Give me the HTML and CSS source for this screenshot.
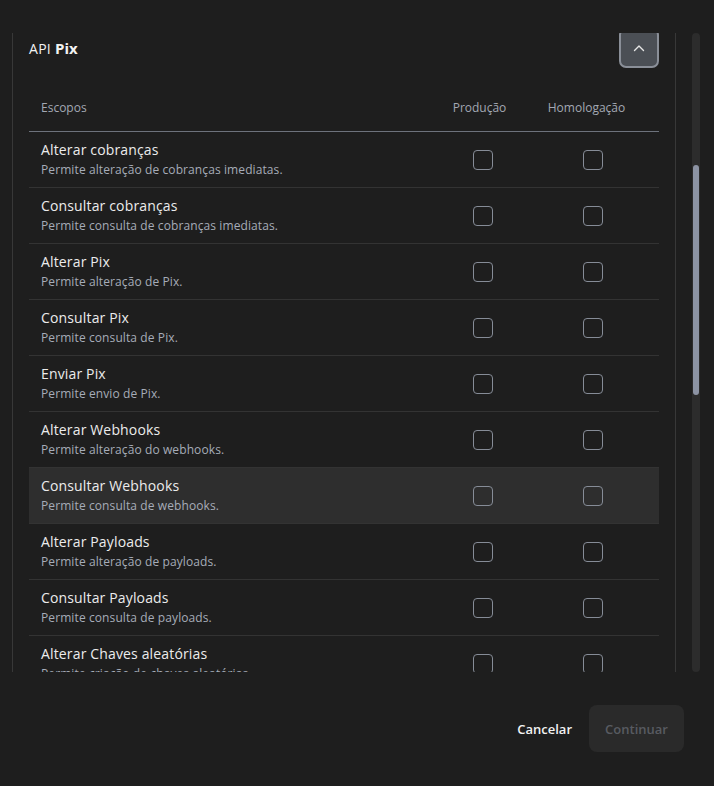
FILE: index.html
```html
<!DOCTYPE html>
<html lang="pt-BR">
<head>
<meta charset="utf-8">
<title>Escopos</title>
<link rel="stylesheet" href="styles.css">
</head>
<body>
<div class="modal">
  <div class="viewport">
    <section class="card">
      <header class="card-head">
        <h2 class="title"><span class="api">API</span> <span class="pix">Pix</span></h2>
        <button class="toggle" aria-label="Recolher">
          <svg width="12" height="8" viewBox="0 0 12 8"><path d="M1.5 6.5 L6 2 L10.5 6.5" fill="none" stroke="#e6e6e6" stroke-width="1.4" stroke-linecap="round" stroke-linejoin="round"/></svg>
        </button>
      </header>
      <div class="table">
        <div class="thead">
          <span>Escopos</span>
          <span class="c">Produção</span>
          <span class="c">Homologação</span>
        </div>
        <div class="row"><div class="info"><div class="name">Alterar cobranças</div><div class="desc">Permite alteração de cobranças imediatas.</div></div><span class="cell"><span class="box"></span></span><span class="cell"><span class="box"></span></span></div>
        <div class="row"><div class="info"><div class="name">Consultar cobranças</div><div class="desc">Permite consulta de cobranças imediatas.</div></div><span class="cell"><span class="box"></span></span><span class="cell"><span class="box"></span></span></div>
        <div class="row"><div class="info"><div class="name">Alterar Pix</div><div class="desc">Permite alteração de Pix.</div></div><span class="cell"><span class="box"></span></span><span class="cell"><span class="box"></span></span></div>
        <div class="row"><div class="info"><div class="name">Consultar Pix</div><div class="desc">Permite consulta de Pix.</div></div><span class="cell"><span class="box"></span></span><span class="cell"><span class="box"></span></span></div>
        <div class="row"><div class="info"><div class="name">Enviar Pix</div><div class="desc">Permite envio de Pix.</div></div><span class="cell"><span class="box"></span></span><span class="cell"><span class="box"></span></span></div>
        <div class="row"><div class="info"><div class="name">Alterar Webhooks</div><div class="desc">Permite alteração do webhooks.</div></div><span class="cell"><span class="box"></span></span><span class="cell"><span class="box"></span></span></div>
        <div class="row hover"><div class="info"><div class="name">Consultar Webhooks</div><div class="desc">Permite consulta de webhooks.</div></div><span class="cell"><span class="box"></span></span><span class="cell"><span class="box"></span></span></div>
        <div class="row"><div class="info"><div class="name">Alterar Payloads</div><div class="desc">Permite alteração de payloads.</div></div><span class="cell"><span class="box"></span></span><span class="cell"><span class="box"></span></span></div>
        <div class="row"><div class="info"><div class="name">Consultar Payloads</div><div class="desc">Permite consulta de payloads.</div></div><span class="cell"><span class="box"></span></span><span class="cell"><span class="box"></span></span></div>
        <div class="row"><div class="info"><div class="name">Alterar Chaves aleatórias</div><div class="desc">Permite criação de chaves aleatórias.</div></div><span class="cell"><span class="box"></span></span><span class="cell"><span class="box"></span></span></div>
      </div>
    </section>
    <div class="track"><div class="thumb"></div></div>
  </div>
  <footer class="actions">
    <button class="btn-cancel">Cancelar</button>
    <button class="btn-continue" disabled>Continuar</button>
  </footer>
</div>
</body>
</html>
```

FILE: styles.css
```css
* { box-sizing: border-box; }
html, body { margin: 0; padding: 0; }
body {
  background: #1e1e1e;
  font-family: "Open Sans", "Noto Sans", sans-serif;
  color: #e8e8e8;
  width: 714px;
  height: 786px;
  overflow: hidden;
}
.modal {
  padding-top: 33px;
  padding-left: 12px;
}
.viewport {
  display: flex;
  height: 639px;
  overflow: hidden;
}
.card {
  width: 664px;
  flex: none;
  border-left: 1px solid #383838;
  border-right: 1px solid #383838;
  padding: 0 16px;
  margin-top: -5px;
}
.card-head {
  display: flex;
  align-items: center;
  justify-content: space-between;
  height: 40px;
}
.title {
  margin: 0;
  font-weight: 400;
  color: #f2f2f2;
  display: flex;
  align-items: baseline;
  gap: 4px;
}
.api { font-size: 14px; letter-spacing: 0.3px; }
.pix { font-size: 15px; font-weight: 700; }
.toggle {
  width: 40px;
  height: 40px;
  background: #4b4f55;
  border: 2px solid #8a8f98;
  border-radius: 7px;
  display: flex;
  align-items: center;
  justify-content: center;
  padding: 0;
}
.table { margin-top: 15px; }
.thead {
  display: grid;
  grid-template-columns: 1fr 91px 123px;
  align-items: center;
  height: 49px;
  padding: 0 11px 0 12px;
  border-bottom: 1px solid #6d727c;
  font-size: 12px;
  color: #a3a8b3;
}
.thead .c { text-align: center; }
.row {
  display: grid;
  grid-template-columns: 1fr 110px 110px;
  align-items: center;
  height: 56px;
  padding: 0 11px 0 12px;
  border-bottom: 1px solid #333333;
}
.row.hover { background: #2e2e2e; }
.info { display: flex; flex-direction: column; gap: 3px; margin-top: -1px; }
.name { font-size: 14px; font-weight: 500; color: #ececec; line-height: 18px; letter-spacing: 0.15px; }
.desc { font-size: 12px; color: #a6acb8; line-height: 16px; letter-spacing: 0.1px; }
.cell { display: flex; justify-content: center; }
.box {
  width: 20px;
  height: 20px;
  border: 1.5px solid #868c97;
  border-radius: 4px;
}
.track {
  margin-left: 16px;
  width: 8px;
  height: 639px;
  background: #2c2c2c;
  border-radius: 4px;
  flex: none;
  display: flex;
  justify-content: center;
}
.thumb {
  margin-top: 132px;
  width: 6px;
  height: 230px;
  background: #8c93a3;
  border-radius: 3px;
}
.actions {
  display: flex;
  justify-content: flex-end;
  align-items: center;
  gap: 17px;
  padding: 33px 30px 0 0;
}
button { font-family: inherit; }
.btn-cancel {
  background: none;
  border: none;
  color: #f2f2f2;
  font-size: 13px;
  font-weight: 600;
  padding: 0;
}
.btn-continue {
  width: 95px;
  height: 47px;
  background: #2a2a2a;
  border: none;
  border-radius: 8px;
  color: #585b61;
  font-size: 13px;
  font-weight: 600;
}
```
